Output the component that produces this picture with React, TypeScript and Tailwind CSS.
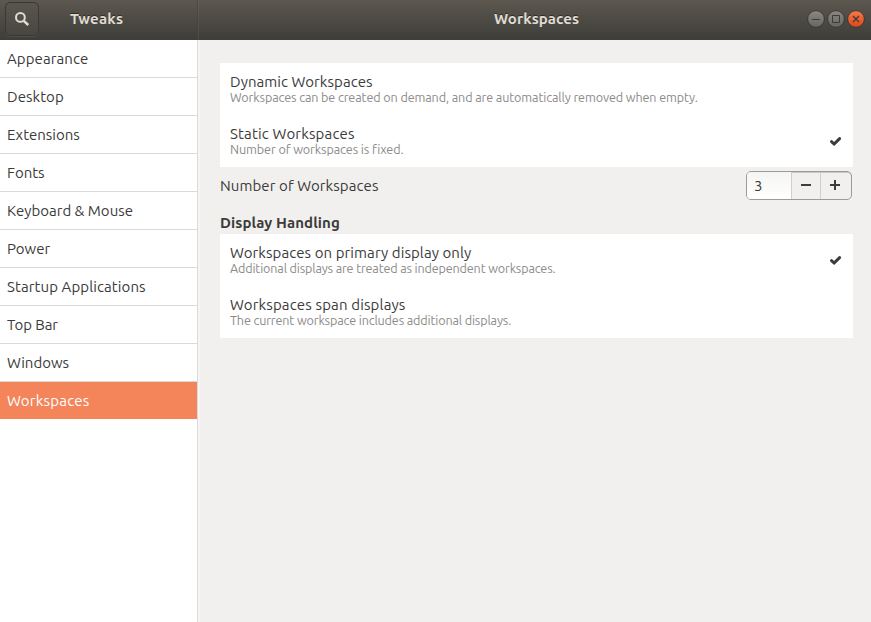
import React from "react";

const sidebarItems: { label: string; tracking: string }[] = [
  { label: "Appearance", tracking: "tracking-[0.1px]" },
  { label: "Desktop", tracking: "tracking-[0.05px]" },
  { label: "Extensions", tracking: "tracking-[0px]" },
  { label: "Fonts", tracking: "tracking-[0px]" },
  { label: "Keyboard & Mouse", tracking: "tracking-[0px]" },
  { label: "Power", tracking: "tracking-[0px]" },
  { label: "Startup Applications", tracking: "tracking-[0.1px]" },
  { label: "Top Bar", tracking: "tracking-[-0.1px]" },
  { label: "Windows", tracking: "tracking-[0px]" },
  { label: "Workspaces", tracking: "tracking-[0.22px]" },
];

function Check() {
  return (
    <svg width="12" height="10" viewBox="0 0 12 10" className="mr-3 shrink-0 overflow-visible">
      <path d="M2.5 5.7 5.1 8 10.6 2.6" fill="none" stroke="#3b3b3b" strokeWidth="3" strokeLinecap="round" />
    </svg>
  );
}

type OptionProps = {
  title: string;
  detail: string;
  checked?: boolean;
  titleClass: string;
  detailClass: string;
};

function Option({ title, detail, checked, titleClass, detailClass }: OptionProps) {
  return (
    <div className="flex h-[52px] items-center justify-between pl-2.5">
      <div className="whitespace-nowrap">
        <div className={`h-[17px] text-[15px] leading-[17px] ${titleClass}`}>{title}</div>
        <div className={`h-[15px] text-[12.6px] leading-[15px] text-[#8c8b89] ${detailClass}`}>{detail}</div>
      </div>
      {checked && <Check />}
    </div>
  );
}

function WindowButton({ kind }: { kind: "min" | "max" | "close" }) {
  const close = kind === "close";
  return (
    <svg width="20" height="20" viewBox="0 0 20 20">
      <defs>
        <linearGradient id={`face-${kind}`} x1="0" y1="0" x2="0" y2="1">
          <stop offset="0" stopColor={close ? "#f5794f" : "#8a8880"} />
          <stop offset="1" stopColor={close ? "#dc4715" : "#66655f"} />
        </linearGradient>
      </defs>
      <circle cx="10" cy="10" r="8.4" fill={`url(#face-${kind})`} stroke="#393833" strokeWidth="1" />
      {kind === "min" && <path d="M6 10.5h8" stroke="#3c3b37" />}
      {kind === "max" && <path d="M6.5 6.5h7v7h-7z" fill="none" stroke="#3c3b37" />}
      {close && <path d="m7 7 6 6m0-6-6 6" stroke="#3c3b37" strokeWidth="1.3" />}
    </svg>
  );
}

export default function App() {
  return (
    <div className="flex h-[622px] w-[871px] flex-col overflow-hidden bg-[#f1f0ee] font-['Ubuntu','Noto_Sans',sans-serif] text-[15px] text-[#3b3b3b]">
      <header className="flex h-10 shrink-0 bg-linear-to-b from-[#5c584f] to-[#3e3d39] text-[15px] font-bold text-[#dfdbd2] [text-shadow:0_-1px_rgba(0,0,0,0.45)]">
        <div className="flex w-[198px] items-center border-r border-[#45433e]/60 pl-[5px]">
          <button className="mb-0.5 flex h-[34px] w-[34px] items-center justify-center rounded-[5px] border border-[#393833] bg-linear-to-b from-[#59564e] to-[#474640] shadow-[0_1px_0_rgba(255,255,255,0.08)]">
            <svg width="16" height="16" viewBox="0 0 16 16" fill="none" stroke="#e0dcd4">
              <circle cx="6.4" cy="6.4" r="4.4" strokeWidth="2" />
              <path d="m9.8 9.8 4.5 4.2" strokeWidth="2.5" />
            </svg>
          </button>
          <span className="mb-0.5 ml-[31px] whitespace-nowrap tracking-[0.25px]">Tweaks</span>
        </div>
        <div className="flex flex-1 items-center border-l border-white/5">
          <span className="mb-0.5 ml-[295px] flex-1 whitespace-nowrap tracking-[0.08px]">Workspaces</span>
          <div className="mr-[5px] mb-[2px] flex">
            <WindowButton kind="min" />
            <WindowButton kind="max" />
            <WindowButton kind="close" />
          </div>
        </div>
      </header>
      <div className="flex flex-1">
        <nav className="w-[198px] shrink-0 border-r border-[#dadada] bg-white">
          {sidebarItems.map(({ label, tracking }) => (
            <div
              key={label}
              className={`flex items-center whitespace-nowrap pt-[2px] pl-[7px] ${tracking} ${
                label === "Workspaces" ? "h-[37px] bg-[#f48459] text-white" : "h-[38px] border-b border-[#dadada]"
              }`}
            >
              {label}
            </div>
          ))}
        </nav>
        <main className="flex-1 border-l-2 border-[#f6f5f4] pt-[23px] pr-[18px] pl-5">
          <section className="bg-white">
            <Option
              title="Dynamic Workspaces"
              detail="Workspaces can be created on demand, and are automatically removed when empty."
              titleClass="tracking-[0.06px]"
              detailClass="tracking-[-0.11px]"
            />
            <Option
              title="Static Workspaces"
              detail="Number of workspaces is fixed."
              checked
              titleClass="tracking-[0.17px]"
              detailClass="tracking-[-0.09px]"
            />
          </section>
          <div className="mt-1 flex h-[29px] items-center justify-between pr-px">
            <span className="whitespace-nowrap pt-[2px] tracking-[0.09px]">Number of Workspaces</span>
            <div className="flex h-[29px] w-[106px] overflow-hidden rounded-[5px] border border-[#9c9b99] bg-[#f1f0ee] shadow-[inset_0_1px_0_#c9c8c6]">
              <div className="flex w-[45px] items-center border-r border-[#d0cfcd] bg-linear-to-b from-[#f5f5f4] to-white pt-[2px] pl-[7px] text-[15px]">3</div>
              <button className="flex w-[29px] items-center justify-center border-r border-[#d0cfcd] pb-px">
                <svg width="10" height="10" viewBox="0 0 10 10"><path d="M0 5h10" stroke="#3d3d3d" strokeWidth="2" /></svg>
              </button>
              <button className="flex flex-1 items-center justify-center pr-0.5 pb-px">
                <svg width="10" height="10" viewBox="0 0 10 10"><path d="M0 5h10M5 0v10" stroke="#3d3d3d" strokeWidth="2" /></svg>
              </button>
            </div>
          </div>
          <h2 className="mt-3 h-[22px] text-[15px] font-bold leading-[22px] tracking-[0.08px]">Display Handling</h2>
          <section className="bg-white">
            <Option
              title="Workspaces on primary display only"
              detail="Additional displays are treated as independent workspaces."
              checked
              titleClass="tracking-[0.08px]"
              detailClass="tracking-[-0.15px]"
            />
            <Option
              title="Workspaces span displays"
              detail="The current workspace includes additional displays."
              titleClass="tracking-[0.15px]"
              detailClass="tracking-[-0.14px]"
            />
          </section>
        </main>
      </div>
    </div>
  );
}
